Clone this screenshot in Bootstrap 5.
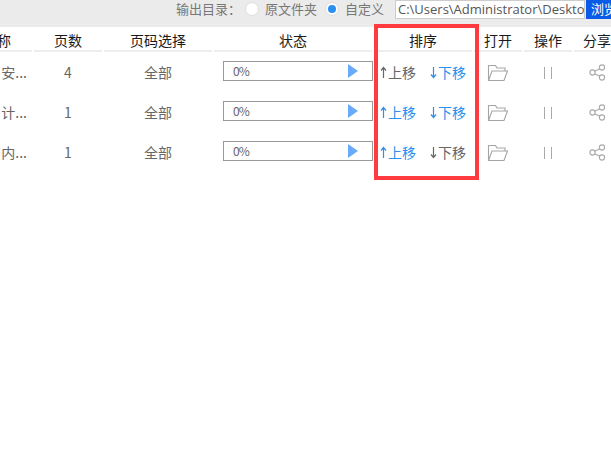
<!DOCTYPE html>
<html lang="zh-CN">
<head>
  <meta charset="UTF-8" />
  <meta name="viewport" content="width=device-width, initial-scale=1" />
  <title>输出目录</title>
  <link href="https://cdn.jsdelivr.net/npm/bootstrap@5.3.0/dist/css/bootstrap.min.css" rel="stylesheet" />
  <style>
    body {
      background: #fff;
      font-family: "Noto Sans CJK SC", "Liberation Sans", sans-serif;
      font-size: 14px;
      overflow: hidden;
    }
    .app { width: 611px; height: 462px; overflow: hidden; position: relative; }
    .topbar { height: 27px; background: #ebebeb; color: #777; padding-left: 176px; white-space: nowrap; font-size: 13px; }
    .topbar-item { height: 17px; line-height: 17px; }
    .topbar-label { width: 69px; }
    .radio-dot {
      width: 14px; height: 14px; border-radius: 50%; background: #fff; border: 1px solid #ddd;
      margin-right: 6px; flex: none; display: flex; align-items: center; justify-content: center;
    }
    .radio-dot.on::after { content: ""; width: 8px; height: 8px; border-radius: 50%; background: #2b8ff0; }
    .radio-one { width: 80px; }
    .radio-two { width: 70px; }
    .path-box {
      width: 190px; height: 19px; line-height: 17px; background: #fff; border: 1px solid #ccc; color: #555;
      font-family: "Open Sans", sans-serif; font-size: 13px; overflow: hidden; padding-left: 2px;
    }
    .browse-btn { width: 25px; height: 19px; line-height: 17px; background: #0a5ce8; color: #fff; margin-left: 1px; overflow: hidden; padding-left: 5px; }
    .grid-row { display: flex; height: 40px; align-items: center; color: #666; }
    .grid-head { height: 25px; color: #1a1a1a; align-items: stretch; }
    .grid-cell { flex: none; margin-right: 2px; text-align: center; white-space: nowrap; overflow: hidden; }
    .grid-head .grid-cell { border-bottom: 2px solid #eee; line-height: 27px; }
    .c-name { width: 32px; display: flex; justify-content: flex-end; }
    .c-pages { width: 68px; }
    .c-range { width: 108px; }
    .c-state { width: 158px; }
    .c-sort { width: 98px; }
    .c-open { width: 48px; }
    .c-op { width: 48px; }
    .c-share { width: 37px; margin-right: 0; padding-left: 9px; }
    .grid-head .c-name { padding-right: 21px; }
    .grid-body { margin-top: -1px; }
    .grid-body .c-name { padding-right: 5px; }
    .grid-body .c-name, .grid-body .c-pages, .grid-body .c-range, .grid-body .c-sort { padding-top: 2px; }
    .grid-body .c-state { overflow: visible; }
    .bar-box {
      width: 150px; height: 20px; border: 1px solid #999; margin-left: 9px;
      display: flex; align-items: center; justify-content: space-between; padding: 0 14px 0 9px;
      font-size: 12px; letter-spacing: -1px; color: #666;
    }
    .sort-pair { display: flex; justify-content: space-between; padding: 0 6px 0 6px; }
    .move-link { color: #666; display: inline-flex; align-items: center; gap: 1px; }
    .move-link.is-on { color: #2b8ff0; }
    .frame-mark { position: absolute; left: 374px; top: 24px; width: 105px; height: 156px; border: 4px solid #ff3b3f; pointer-events: none; }
  </style>
</head>
<body>
  <div class="app">
    <div class="topbar d-flex align-items-start">
      <span class="topbar-item topbar-label">输出目录：</span>
      <span class="topbar-item radio-one d-flex align-items-center"><span class="radio-dot"></span>原文件夹</span>
      <span class="topbar-item radio-two d-flex align-items-center"><span class="radio-dot on"></span>自定义</span>
      <span class="path-box">C:\Users\Administrator\Deskto</span>
      <span class="browse-btn">浏览</span>
    </div>

    <div class="grid-row grid-head">
      <div class="grid-cell c-name">名称</div>
      <div class="grid-cell c-pages">页数</div>
      <div class="grid-cell c-range">页码选择</div>
      <div class="grid-cell c-state">状态</div>
      <div class="grid-cell c-sort">排序</div>
      <div class="grid-cell c-open">打开</div>
      <div class="grid-cell c-op">操作</div>
      <div class="grid-cell c-share">分享</div>
    </div>

    <div class="grid-body" id="rows"></div>

    <div class="frame-mark"></div>
  </div>

  <script>
    const up = '<svg width="7" height="13" viewBox="0 0 7 13"><path d="M3.5 12V1.5M1 4.5l2.5-3 2.5 3" fill="none" stroke="currentColor" stroke-width="1.2"/></svg>';
    const down = '<svg width="7" height="13" viewBox="0 0 7 13"><path d="M3.5 1v10.5M1 8.5l2.5 3 2.5-3" fill="none" stroke="currentColor" stroke-width="1.2"/></svg>';
    const folder = '<svg width="22" height="18" viewBox="0 0 22 18"><path d="M1.5 16.5V1.5h7l1.5 2.5h8v3M1.5 16.5h15.5l3.5-9.5H5z" fill="none" stroke="#a5a5a5" stroke-width="1.1"/></svg>';
    const pause = '<svg width="8" height="12" viewBox="0 0 8 12"><path d="M.5 0v12M7.5 0v12" stroke="#aaa" stroke-width="1"/></svg>';
    const share = '<svg width="17" height="17" viewBox="0 0 17 17"><g fill="none" stroke="#aaa" stroke-width="1.1"><circle cx="3.5" cy="8.5" r="2.6"/><circle cx="13" cy="3.5" r="2.6"/><circle cx="13" cy="13.5" r="2.6"/><path d="M5.8 7.3l4.9-2.6M5.8 9.7l4.9 2.6"/></g></svg>';
    const play = '<svg width="10" height="14" viewBox="0 0 10 14"><path d="M0 0l10 7-10 7z" fill="#6aabf7"/></svg>';

    const rows = [
      { name: "安...", pages: 4, upOn: false, downOn: true },
      { name: "计...", pages: 1, upOn: true, downOn: true },
      { name: "内...", pages: 1, upOn: true, downOn: false }
    ];

    document.getElementById("rows").innerHTML = rows.map((r) => `
      <div class="grid-row">
        <div class="grid-cell c-name">${r.name}</div>
        <div class="grid-cell c-pages">${r.pages}</div>
        <div class="grid-cell c-range">全部</div>
        <div class="grid-cell c-state"><div class="bar-box"><span>0%</span>${play}</div></div>
        <div class="grid-cell c-sort"><div class="sort-pair">
          <span class="move-link ${r.upOn ? "is-on" : ""}">${up}上移</span>
          <span class="move-link ${r.downOn ? "is-on" : ""}">${down}下移</span>
        </div></div>
        <div class="grid-cell c-open">${folder}</div>
        <div class="grid-cell c-op">${pause}</div>
        <div class="grid-cell c-share">${share}</div>
      </div>`).join("");
  </script>
  <script src="https://cdn.jsdelivr.net/npm/bootstrap@5.3.0/dist/js/bootstrap.bundle.min.js"></script>
</body>
</html>
